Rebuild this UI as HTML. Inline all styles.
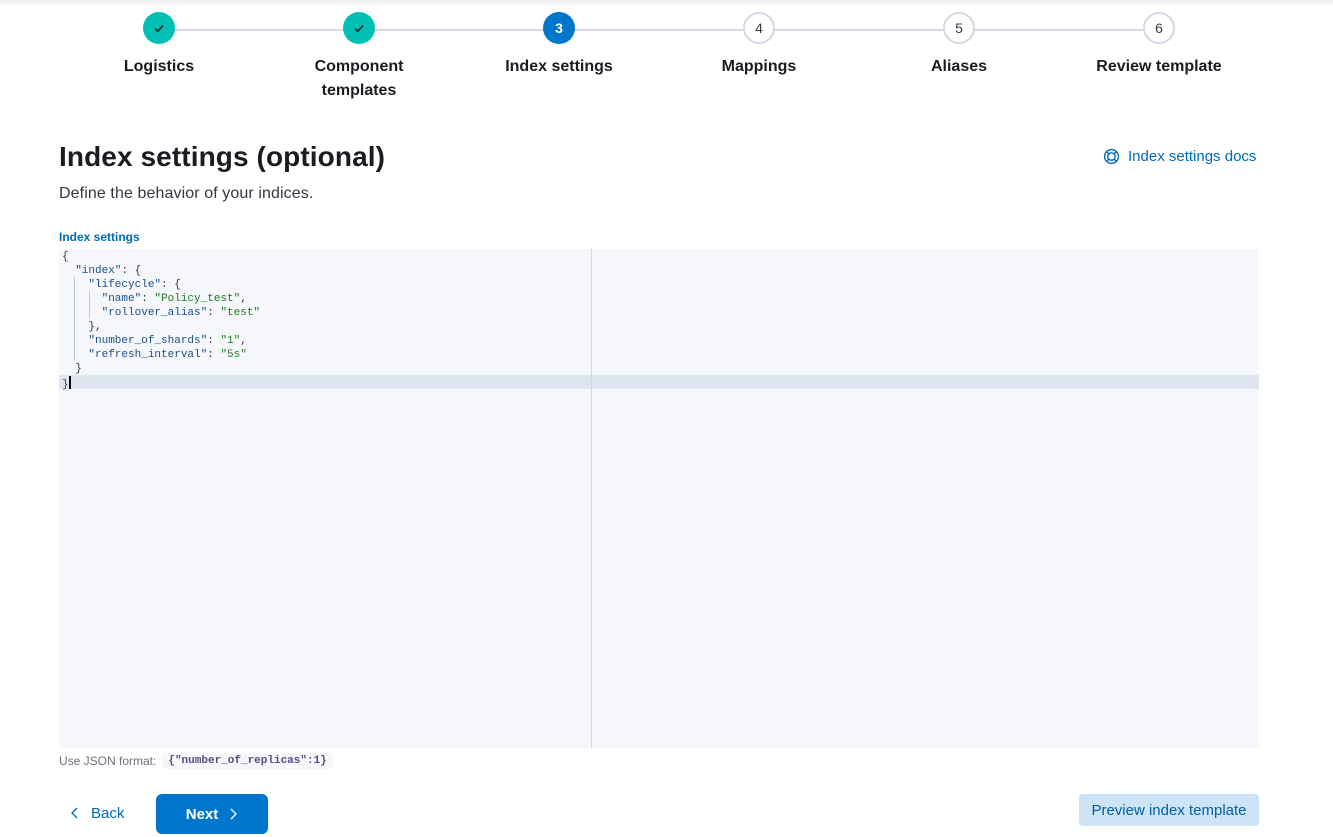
<!DOCTYPE html>
<html><head><meta charset="utf-8"><style>
*{box-sizing:border-box;margin:0;padding:0}
body{width:1333px;height:837px;background:#fff;font-family:"Liberation Sans",sans-serif;color:#1a1c21;position:relative;overflow:hidden}
.topshadow{position:absolute;left:0;top:0;width:1333px;height:6px;background:linear-gradient(#eceef2,#fff)}
.line{position:absolute;top:29px;height:2px;background:#d3dae6}
.step{position:absolute;top:12px;width:200px;text-align:center}
.c{width:32px;height:32px;border-radius:50%;margin:0 auto;display:flex;align-items:center;justify-content:center;font-size:14px;font-weight:bold}
.done{background:#00bfb3}
.cur{background:#0077cc;color:#fff}
.todo{background:#fff;border:2px solid #d3dae6;color:#343741;font-weight:normal}
.lbl{font-weight:bold;font-size:16px;line-height:24px;margin-top:11px;color:#1a1c21}
h1{position:absolute;left:59px;top:141px;font-size:28px;font-weight:bold;letter-spacing:0.1px}
.sub{position:absolute;left:59px;top:185px;font-size:16px;color:#343741;letter-spacing:0.1px}
.docs{position:absolute;left:1103px;top:148px;font-size:15px;color:#006bb8;display:flex;align-items:center;gap:8px}
.flab{position:absolute;left:59px;top:230px;font-size:12px;font-weight:bold;color:#006bb8}
.ed{position:absolute;left:59px;top:249px;width:1200px;height:499px;background:#f5f7fa}
.div{position:absolute;left:532px;top:0;width:1px;height:499px;background:#d3dae6}
.act{position:absolute;left:0;top:126px;width:1200px;height:14px;background:#dfe5ef}
pre{position:absolute;left:3px;top:1px;font-family:"Liberation Mono",monospace;font-size:11px;line-height:14px;color:#343741}
.s{color:#1f7a1f}.k{color:#1b4f8a}
.g{position:absolute;width:1px;background:#c5cbd4}
.hint{position:absolute;left:59px;top:753px;font-size:12px;color:#69707d;display:flex;align-items:center;gap:6px}
.hint code{font-family:"Liberation Mono",monospace;font-weight:bold;font-size:11px;color:#5a4a8a;background:#f5f7fa;padding:2px 6px;border-radius:3px}
.back{position:absolute;left:70px;top:805px;font-size:15px;color:#006bb8}
.next{position:absolute;left:156px;top:794px;width:112px;height:40px;background:#0077cc;border-radius:6px;color:#fff;font-weight:bold;font-size:15px;display:flex;align-items:center;justify-content:center}
.prev{position:absolute;left:1079px;top:794px;width:180px;height:32px;background:#cce4f5;border-radius:4px;color:#0061a6;font-size:15px;display:flex;align-items:center;justify-content:center}
</style></head><body>
<div class="topshadow"></div>
<div class="line" style="left:159px;width:1000px"></div>
<div class="step" style="left:59px"><div class="c done"><svg width="14" height="14" viewBox="0 0 14 14"><path d="M3 7.5l2.8 2.8L11 4.5" stroke="#1a1c21" stroke-width="1.5" fill="none"/></svg></div><div class="lbl">Logistics</div></div>
<div class="step" style="left:259px"><div class="c done"><svg width="14" height="14" viewBox="0 0 14 14"><path d="M3 7.5l2.8 2.8L11 4.5" stroke="#1a1c21" stroke-width="1.5" fill="none"/></svg></div><div class="lbl">Component<br>templates</div></div>
<div class="step" style="left:459px"><div class="c cur">3</div><div class="lbl">Index settings</div></div>
<div class="step" style="left:659px"><div class="c todo">4</div><div class="lbl">Mappings</div></div>
<div class="step" style="left:859px"><div class="c todo">5</div><div class="lbl">Aliases</div></div>
<div class="step" style="left:1059px"><div class="c todo">6</div><div class="lbl">Review template</div></div>
<h1>Index settings (optional)</h1>
<div class="sub">Define the behavior of your indices.</div>
<div class="docs"><svg width="17" height="17" viewBox="0 0 16 16" fill="none" stroke="#006bb8" stroke-width="1.3"><circle cx="8" cy="8" r="6.5"/><circle cx="8" cy="8" r="3.5"/><path d="M3.4 3.4l2.1 2.1M12.6 3.4l-2.1 2.1M3.4 12.6l2.1-2.1M12.6 12.6l-2.1-2.1"/></svg>Index settings docs</div>
<div class="flab">Index settings</div>
<div class="ed">
<div class="act"></div>
<div class="div"></div>
<div class="g" style="left:15px;top:28px;height:84px"></div>
<div class="g" style="left:30px;top:42px;height:28px"></div>
<pre>{
  <span class="k">"index"</span>: {
    <span class="k">"lifecycle"</span>: {
      <span class="k">"name"</span>: <span class="s">"Policy_test"</span>,
      <span class="k">"rollover_alias"</span>: <span class="s">"test"</span>
    },
    <span class="k">"number_of_shards"</span>: <span class="s">"1"</span>,
    <span class="k">"refresh_interval"</span>: <span class="s">"5s"</span>
  }
}<span style="display:inline-block;width:2px;height:13px;background:#000;vertical-align:-2px"></span></pre>
</div>
<div class="hint">Use JSON format: <code>{"number_of_replicas":1}</code></div>
<div class="back"><svg width="10" height="12" viewBox="0 0 10 12" style="margin-right:11px;vertical-align:-1px"><path d="M7 1L2 6l5 5" stroke="#006bb8" stroke-width="1.3" fill="none"/></svg>Back</div>
<div class="next">Next<svg width="10" height="12" viewBox="0 0 10 12" style="margin-left:10px"><path d="M3 1l5 5-5 5" stroke="#fff" stroke-width="1.3" fill="none"/></svg></div>
<div class="prev">Preview index template</div>
</body></html>
